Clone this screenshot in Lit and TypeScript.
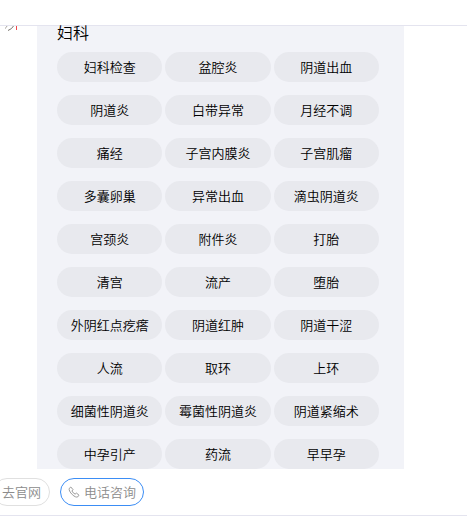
import { LitElement, html, css } from "lit";
import { customElement, property } from "lit/decorators.js";

@customElement("topic-group")
class TopicGroup extends LitElement {
  @property() heading = "";
  @property({ attribute: false }) topics: string[] = [];

  static styles = css`
    :host {
      display: block;
      background: #f2f3f8;
      padding: 0 25px 0 20px;
    }
    .heading {
      margin: 0 0 13px;
      height: 13px;
      line-height: 13px;
      font-size: 16px;
      font-weight: 350;
      color: #000;
    }
    .grid {
      display: grid;
      grid-template-columns: repeat(3, 1fr);
      gap: 13px 3px;
    }
    .pill {
      height: 30px;
      padding: 0;
      border: 0;
      border-radius: 15px;
      background: #e8e9ee;
      color: #000;
      font: inherit;
      font-size: 13px;
      line-height: 30px;
      white-space: nowrap;
      cursor: pointer;
    }
  `;

  render() {
    return html`
      <h2 class="heading">${this.heading}</h2>
      <div class="grid">
        ${this.topics.map((t) => html`<button class="pill" type="button">${t}</button>`)}
      </div>
    `;
  }
}

@customElement("app-root")
class AppRoot extends LitElement {
  private topics = [
    "妇科检查", "盆腔炎", "阴道出血",
    "阴道炎", "白带异常", "月经不调",
    "痛经", "子宫内膜炎", "子宫肌瘤",
    "多囊卵巢", "异常出血", "滴虫阴道炎",
    "宫颈炎", "附件炎", "打胎",
    "清宫", "流产", "堕胎",
    "外阴红点疙瘩", "阴道红肿", "阴道干涩",
    "人流", "取环", "上环",
    "细菌性阴道炎", "霉菌性阴道炎", "阴道紧缩术",
    "中孕引产", "药流", "早早孕",
  ];

  static styles = css`
    :host {
      display: block;
      overflow: hidden;
      background: #fff;
      font-family: "Noto Sans CJK SC", sans-serif;
      font-weight: 350;
    }
    .top {
      height: 25px;
      border-bottom: 1px solid #e4e4ef;
    }
    .main {
      display: flex;
      align-items: flex-start;
    }
    .side {
      flex: none;
      width: 37px;
    }
    .logo {
      display: block;
    }
    .group {
      flex: 1;
      margin-right: 63px;
    }
    .actions {
      display: flex;
      gap: 10px;
      margin-left: -7px;
      padding: 9px 0;
      border-bottom: 1px solid #e4e4ef;
    }
    .action {
      display: flex;
      align-items: center;
      gap: 4px;
      box-sizing: border-box;
      height: 28px;
      padding: 0 8px;
      border: 1px solid #e0e0e0;
      border-radius: 14px;
      background: #fff;
      color: #8c8c8c;
      font: inherit;
      font-size: 13px;
      line-height: 26px;
      text-decoration: none;
      white-space: nowrap;
    }
    .call {
      padding: 0 7px;
      border-color: #3b8df5;
      cursor: pointer;
    }
  `;

  render() {
    return html`
      <header class="top"></header>
      <main class="main">
        <div class="side">
          <svg class="logo" width="20" height="6" viewBox="0 0 20 6" fill="none" aria-hidden="true">
            <path d="M7 0Q6.500 1.500 5 2.500" stroke="#a5a29c" />
            <path d="M13.500 0Q12 3 8 4.500" stroke="#77736c" />
            <path d="M16.500 0V4" stroke="#f0484c" />
          </svg>
        </div>
        <topic-group class="group" heading="妇科" .topics=${this.topics}></topic-group>
      </main>
      <nav class="actions">
        <a class="action" href="#">去官网</a>
        <button class="action call" type="button">
          <svg width="12" height="12" viewBox="0 0 12 12" fill="none" stroke="#999" stroke-linejoin="round" aria-hidden="true">
            <path d="M1.300 2.300 2.800 1 5 3.600 3.900 5C4.600 6.400 5.700 7.500 7.100 8.100L8.500 7.100 11 9.200 9.800 10.800C8.700 11.600 6.400 10.700 4.300 8.600 2 6.400.6 3.800 1.300 2.300Z" />
          </svg>
          电话咨询
        </button>
      </nav>
    `;
  }
}
